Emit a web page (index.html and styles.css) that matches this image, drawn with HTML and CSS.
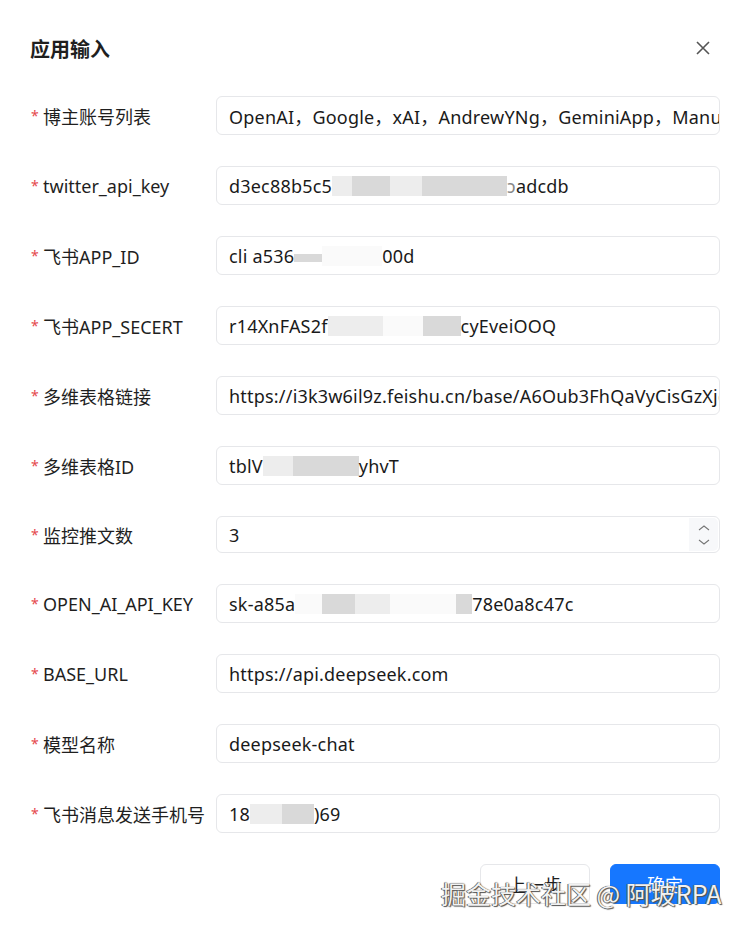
FILE: index.html
```html
<!DOCTYPE html>
<html lang="zh-CN">
<head>
  <meta charset="UTF-8" />
  <meta name="viewport" content="width=device-width, initial-scale=1.0" />
  <title>应用输入</title>
  <link rel="stylesheet" href="styles.css">
</head>
<body>
  <div class="dialog">
    <header class="dialog-header">
      <h2>应用输入</h2>
      <button class="close-btn" aria-label="关闭">
        <svg width="16" height="16" viewBox="0 0 16 16"><path d="M2 2L14 14M14 2L2 14" stroke="#555" stroke-width="1.6" fill="none"/></svg>
      </button>
    </header>

    <form class="form">
      <div class="row">
        <label><span class="req">*</span>博主账号列表</label>
        <div class="field">OpenAI，Google，xAI，AndrewYNg，GeminiApp，ManusAI，OpenAIDevs</div>
      </div>

      <div class="row">
        <label><span class="req">*</span>twitter_api_key</label>
        <div class="field">d3ec88b5c5<span class="blur b1" style="width:20px"></span><span class="blur b2" style="width:38px"></span><span class="blur b1" style="width:32px"></span><span class="blur b2" style="width:85px"></span><span class="cut">ɔ</span>adcdb</div>
      </div>

      <div class="row">
        <label><span class="req">*</span>飞书APP_ID</label>
        <div class="field">cli a536<span class="blur b2 low" style="width:28px"></span><span class="blur b0" style="width:60px"></span>00d</div>
      </div>

      <div class="row">
        <label><span class="req">*</span>飞书APP_SECERT</label>
        <div class="field">r14XnFAS2f<span class="blur b1" style="width:55px"></span><span class="blur b0" style="width:40px"></span><span class="blur b2" style="width:38px"></span>cyEveiOOQ</div>
      </div>

      <div class="row">
        <label><span class="req">*</span>多维表格链接</label>
        <div class="field">https://i3k3w6il9z.feishu.cn/base/A6Oub3FhQaVyCisGzXjcnY0wn1d</div>
      </div>

      <div class="row">
        <label><span class="req">*</span>多维表格ID</label>
        <div class="field">tblV<span class="blur b1" style="width:30px"></span><span class="blur b2" style="width:66px"></span>yhvT</div>
      </div>

      <div class="row row-number">
        <label><span class="req">*</span>监控推文数</label>
        <div class="field field-number">
          <span>3</span>
          <span class="spinner">
            <svg width="12" height="8" viewBox="0 0 12 8"><path d="M1 6L6 2L11 6" stroke="#777" stroke-width="1.1" fill="none"/></svg>
            <svg width="12" height="8" viewBox="0 0 12 8"><path d="M1 2L6 6L11 2" stroke="#777" stroke-width="1.1" fill="none"/></svg>
          </span>
        </div>
      </div>

      <div class="row">
        <label><span class="req">*</span>OPEN_AI_API_KEY</label>
        <div class="field">sk-a85a<span class="blur b0" style="width:27px"></span><span class="blur b2" style="width:33px"></span><span class="blur b1" style="width:35px"></span><span class="blur b0" style="width:66px"></span><span class="blur b2" style="width:16px"></span>78e0a8c47c</div>
      </div>

      <div class="row">
        <label><span class="req">*</span>BASE_URL</label>
        <div class="field">https://api.deepseek.com</div>
      </div>

      <div class="row">
        <label><span class="req">*</span>模型名称</label>
        <div class="field">deepseek-chat</div>
      </div>

      <div class="row">
        <label><span class="req">*</span>飞书消息发送手机号</label>
        <div class="field">18<span class="blur b1" style="width:32px"></span><span class="blur b2" style="width:32px"></span>)69</div>
      </div>

      <div class="actions">
        <button type="button" class="btn">上一步</button>
        <button type="button" class="btn btn-primary">确定</button>
      </div>
    </form>
  </div>

  <div class="watermark">掘金技术社区 @ 阿坡RPA</div>
</body>
</html>
```

FILE: styles.css
```css
* {
  margin: 0;
  padding: 0;
  box-sizing: border-box;
}

body {
  background: #fff;
  font-family: "Noto Sans", "Noto Sans CJK SC", sans-serif;
  color: #1f2329;
  position: relative;
  min-height: 933px;
  overflow: hidden;
}

.dialog {
  padding: 26px 30px 0;
}

.dialog-header {
  display: flex;
  align-items: center;
  justify-content: space-between;
  height: 44px;
}

.dialog-header h2 {
  font-size: 20px;
  font-weight: 700;
  font-family: "Noto Sans CJK SC", sans-serif;
  color: #1f1f1f;
}

.close-btn {
  background: none;
  border: none;
  width: 16px;
  height: 16px;
  margin-right: 9px;
  display: flex;
}

.form {
  margin-top: 26px;
}

.row {
  display: flex;
  align-items: center;
  height: 39px;
  margin-bottom: 31px;
}

.row-number {
  height: 37px;
}

.row label {
  width: 186px;
  flex-shrink: 0;
  font-size: 18px;
  display: flex;
  align-items: center;
  color: #1f1f1f;
}

.req {
  color: #e5484d;
  font-size: 14px;
  width: 13px;
  padding-left: 1px;
}

.field {
  flex: 1;
  height: 100%;
  border: 1px solid #e6e7ea;
  border-radius: 6px;
  padding: 0 12px;
  font-size: 18px;
  letter-spacing: 0.2px;
  display: flex;
  align-items: center;
  white-space: nowrap;
  overflow: hidden;
  color: #1a1a1a;
}

.blur {
  display: inline-block;
  height: 20px;
  flex-shrink: 0;
}

.blur.low {
  height: 8px;
  margin-top: 4px;
}

.b0 {
  background: #fafafa;
}

.b1 {
  background: #ededed;
}

.b2 {
  background: #d9d9d9;
}

.cut {
  color: #888;
}

.field-number {
  justify-content: space-between;
  padding-right: 1px;
}

.spinner {
  width: 29px;
  height: 33px;
  background: #f7f8fa;
  border-radius: 0 5px 5px 0;
  display: flex;
  flex-direction: column;
  align-items: center;
  justify-content: center;
  gap: 6px;
}

.actions {
  display: flex;
  justify-content: flex-end;
  gap: 20px;
}

.btn {
  width: 110px;
  height: 40px;
  border: 1px solid #e6e7ea;
  border-radius: 6px;
  background: #fff;
  font-family: "Noto Sans CJK SC", sans-serif;
  font-size: 18px;
  color: #1f1f1f;
}

.btn-primary {
  background: #1677ff;
  border-color: #1677ff;
  color: #fff;
}

.watermark {
  position: absolute;
  left: 441px;
  top: 875px;
  font-family: "Noto Sans CJK SC", sans-serif;
  font-size: 25px;
  color: #f2f2f2;
  text-shadow: 0 0 1px #333, 1px 1px 1px #555, -1px 0 0 #777;
  white-space: nowrap;
}
```
